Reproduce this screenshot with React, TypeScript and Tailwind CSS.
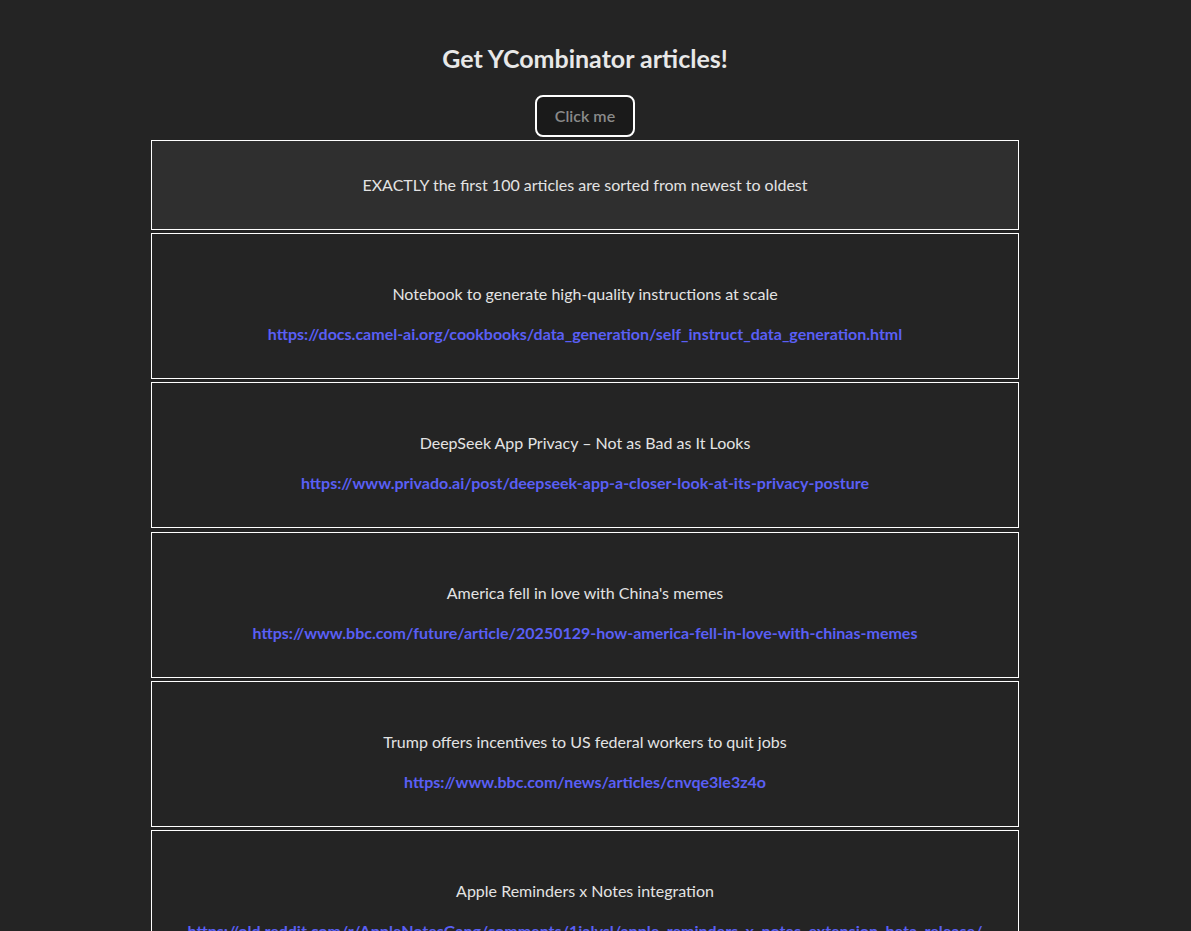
const articles = [
  {
    title: "Notebook to generate high-quality instructions at scale",
    url: "https://docs.camel-ai.org/cookbooks/data_generation/self_instruct_data_generation.html",
  },
  {
    title: "DeepSeek App Privacy – Not as Bad as It Looks",
    url: "https://www.privado.ai/post/deepseek-app-a-closer-look-at-its-privacy-posture",
  },
  {
    title: "America fell in love with China's memes",
    url: "https://www.bbc.com/future/article/20250129-how-america-fell-in-love-with-chinas-memes",
  },
  {
    title: "Trump offers incentives to US federal workers to quit jobs",
    url: "https://www.bbc.com/news/articles/cnvqe3le3z4o",
  },
  {
    title: "Apple Reminders x Notes integration",
    url: "https://old.reddit.com/r/AppleNotesGang/comments/1ialvsl/apple_reminders_x_notes_extension_beta_release/",
  },
]

export default function App() {
  return (
    <div className="min-h-[931px] bg-[#242424] text-[#e3e3e3] font-['Segoe_UI','Lato',sans-serif] text-base leading-6">
      <div className="w-[1170px]">
        <div className="w-[868px] mx-auto pt-[42px] flex flex-col items-center">
          <h2 className="text-[25px] leading-8 font-bold text-[#e8e8e8]">Get YCombinator articles!</h2>
          <button className="mt-[21px] h-[42px] px-[18px] rounded-lg border-2 border-white bg-[#1a1a1a] text-[#8a8a8a] font-semibold">
            Click me
          </button>
          <div className="mt-[3px] w-full flex flex-col gap-[3.2px]">
            <div className="border border-white bg-[#2f2f2f] py-8 text-center">
              EXACTLY the first 100 articles are sorted from newest to oldest
            </div>
            {articles.map((a) => (
              <div key={a.url} className="border border-white bg-[#242424] pt-12 pb-8 text-center">
                <p>{a.title}</p>
                <a href={a.url} className="mt-4 block font-bold text-[#5a5ff5] whitespace-nowrap">
                  {a.url}
                </a>
              </div>
            ))}
          </div>
        </div>
      </div>
    </div>
  )
}
